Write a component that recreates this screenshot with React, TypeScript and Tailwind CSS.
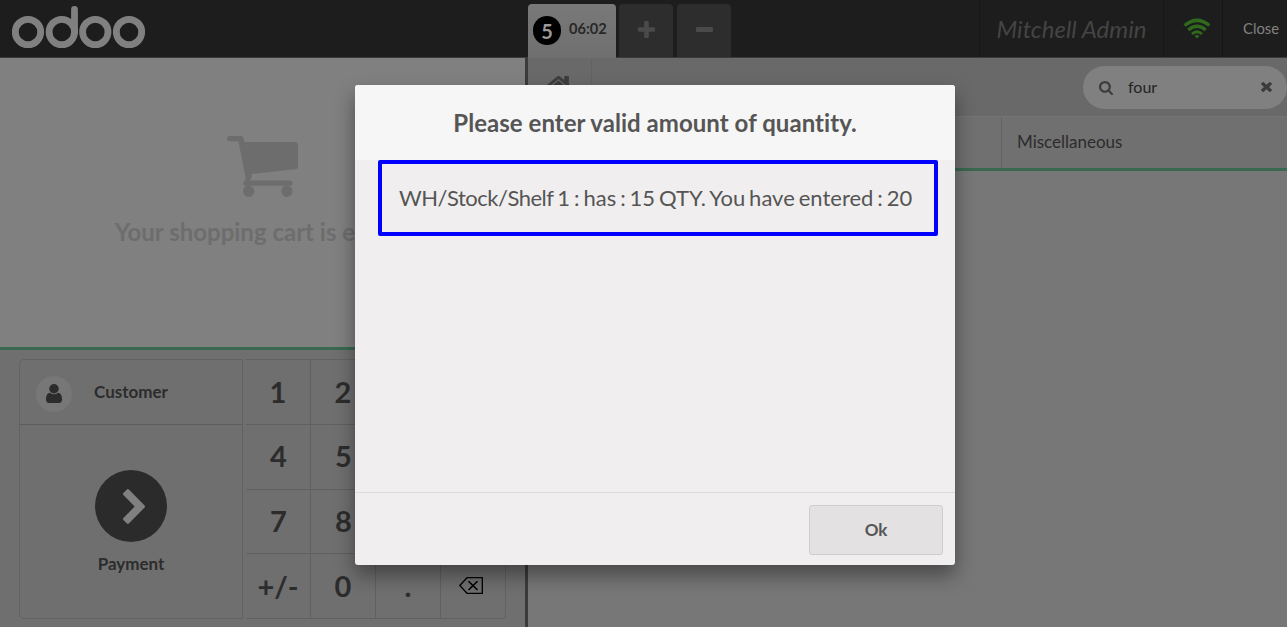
import React from "react";

function Glyph({ box, d, className }: { box: string; d: string; className: string }) {
  return (
    <svg viewBox={box} className={className} fill="currentColor" preserveAspectRatio="none">
      <path d={d} />
    </svg>
  );
}

const PLUS =
  "M1600 736v192q0 40-28 68t-68 28h-416v416q0 40-28 68t-68 28h-192q-40 0-68-28t-28-68v-416h-416q-40 0-68-28t-28-68v-192q0-40 28-68t68-28h416v-416q0-40 28-68t68-28h192q40 0 68 28t28 68v416h416q40 0 68 28t28 68z";
const MINUS = "M1600 736v192q0 40-28 68t-68 28h-1216q-40 0-68-28t-28-68v-192q0-40 28-68t68-28h1216q40 0 68 28t28 68z";
const USER =
  "M1536 1399q0 109-62.5 187t-150.5 78h-854q-88 0-150.5-78t-62.5-187q0-85 8.5-160.5t31.5-152 58.5-131 94-89 134.5-34.5q131 128 313 128t313-128q76 0 134.5 34.5t94 89 58.5 131 31.5 152 8.5 160.5zm-256-887q0 159-112.5 271.5t-271.5 112.5-271.5-112.5-112.5-271.5 112.5-271.5 271.5-112.5 271.5 112.5 112.5 271.5z";
const SEARCH =
  "M1216 832q0-185-131.5-316.5t-316.5-131.5-316.5 131.5-131.5 316.5 131.5 316.5 316.5 131.5 316.5-131.5 131.5-316.5zm512 832q0 52-38 90t-90 38q-54 0-90-38l-343-342q-179 124-399 124-143 0-273.5-55.5t-225-150-150-225-55.5-273.5 55.5-273.5 150-225 225-150 273.5-55.5 273.5 55.5 225 150 150 225 55.5 273.5q0 220-124 399l343 343q37 37 37 90z";
const TIMES =
  "M1490 1322q0 40-28 68l-136 136q-28 28-68 28t-68-28l-294-294-294 294q-28 28-68 28t-68-28l-136-136q-28-28-28-68t28-68l294-294-294-294q-28-28-28-68t28-68l136-136q28-28 68-28t68 28l294 294 294-294q28-28 68-28t68 28l136 136q28 28 28 68t-28 68l-294 294 294 294q28 28 28 68z";
const CHEVRON =
  "M1363 877l-742 742q-19 19-45 19t-45-19l-166-166q-19-19-19-45t19-45l531-531-531-531q-19-19-19-45t19-45l166-166q19-19 45-19t45 19l742 742q19 19 19 45t-19 45z";
const HOME =
  "M1472 992v480q0 26-19 45t-45 19h-384v-384h-256v384h-384q-26 0-45-19t-19-45v-480q0-1 .5-3t.5-3l575-474 575 474q1 2 1 6zm223-69l-62 74q-8 9-21 11h-3q-13 0-21-7l-692-577-692 577q-12 8-24 7-13-2-21-11l-62-74q-8-10-7-23.5t11-21.5l719-599q32-26 76-26t76 26l244 204v-195q0-14 9-23t23-9h192q14 0 23 9t9 23v408l219 182q10 8 11 21.5t-7 23.5z";

function Logo() {
  return (
    <svg viewBox="0 0 134 43" className="ml-3 mt-[6px] h-[43px] w-[134px]" fill="none" stroke="#808080" strokeWidth="6.8">
      <circle cx="16" cy="26" r="12.7" />
      <circle cx="49.8" cy="26" r="12.7" />
      <circle cx="83.3" cy="26" r="12.7" />
      <circle cx="117" cy="26" r="12.7" />
      <path d="M62.5 26V3.4" strokeLinecap="round" />
    </svg>
  );
}

function Header() {
  return (
    <header className="flex h-[58px] shrink-0 border-b border-[#3a3a3a] bg-[#1d1d1d]">
      <div className="w-[528px] shrink-0">
        <Logo />
      </div>
      <div className="-mb-px flex flex-1 items-end">
        <div className="flex h-[54px] w-[88px] items-center rounded-t-[4px] bg-linear-to-b from-[#797979] to-[#6f6f6f] pl-[5px]">
          <span className="mb-px flex h-[29px] w-7 items-center justify-center rounded-full bg-black text-[20px] font-bold text-[#9a9a9a]">5</span>
          <span className="ml-2 pb-[5px] text-[14.6px] font-bold text-[#282828]">06:02</span>
        </div>
        <div className="mb-px ml-[3px] flex h-[53px] w-[54px] items-center justify-center rounded-t-[4px] bg-[#2d2d2d] text-[#4a4a4a]">
          <Glyph box="192 128 1408 1408" d={PLUS} className="mb-[2px] h-[17px] w-[17px]" />
        </div>
        <div className="mb-px ml-1 flex h-[53px] w-[54px] items-center justify-center rounded-t-[4px] bg-[#2d2d2d] text-[#4a4a4a]">
          <Glyph box="192 640 1408 384" d={MINUS} className="mb-[2px] h-[5px] w-[17px]" />
        </div>
      </div>
      <div className="flex h-[57px] w-[184px] items-center justify-center border-l border-[#161616] pb-px text-[24px] italic text-[#444]">
        <span className="pt-[2px]">Mitchell Admin</span>
      </div>
      <div className="flex h-[57px] w-[59px] justify-center border-l border-[#161616] pl-[7px] pt-[18px]">
        <svg viewBox="0 0 28 21" className="h-[21px] w-7" fill="none" stroke="#2f691b" strokeWidth="3.5">
          <path d="M1.6 7.5Q14-2.7 26.4 7.5" />
          <path d="M5.3 12Q14 4.6 22.7 12" strokeWidth="3.3" />
          <path d="M9 16Q14 11.6 19 16" strokeWidth="2.9" />
          <path d="M11.6 17.9Q14 16 16.4 17.9L14 20.4Z" fill="#2f691b" stroke="none" />
        </svg>
      </div>
      <div className="flex h-[57px] w-[65px] items-center border-l border-[#161616] pl-5 text-[14.8px] text-[#828282]">Close</div>
    </header>
  );
}

function Key({ label, lift }: { label: string; lift?: boolean }) {
  return (
    <div
      className={
        lift
          ? "flex items-center justify-center border-b border-r border-[#606060] pb-[2px] pl-px text-[29px] font-bold text-[#2c2c2c]"
          : "flex items-center justify-center border-b border-r border-[#606060] text-[29px] font-bold text-[#2c2c2c]"
      }
    >
      {label}
    </div>
  );
}

function Backspace() {
  return (
    <div className="flex items-center justify-center rounded-br-[4px] border-b border-r border-[#626262] pb-[2px] pr-[4px]">
      <svg viewBox="0 0 24 17" className="h-[17px] w-6" fill="none" stroke="#000" strokeWidth="1.3">
        <path d="M.8 8.5L8 .7h15.3v15.6H8Z" />
        <path d="M9.5 4.2l9 8.8M18.5 4.2l-9 8.8" strokeWidth="1.6" />
      </svg>
    </div>
  );
}

function Cart() {
  return (
    <svg viewBox="0 0 72 62" className="h-[62px] w-[71px]" preserveAspectRatio="none" fill="#6d6d6d">
      <path d="M2.7 0H14.5Q16.5 0 17 3L17.5 6H69.5Q72 6 72 8.5V30.5Q72 33 69.5 33.3L25 38V41.5L23 44.5H63.8a2.6 2.6 0 0 1 0 5.3H19.3Q16.5 49.8 16.5 47.2L19 42.5L11.6 5.3H2.7a2.65 2.65 0 0 1 0-5.3Z" />
      <circle cx="22" cy="55.3" r="5.7" />
      <circle cx="60.8" cy="55.3" r="5.7" />
    </svg>
  );
}

function OrderPane() {
  return (
    <section className="flex w-[528px] shrink-0 flex-col border-r-[3px] border-[#3b3b3b] bg-[#6f6f6f]">
      <div className="flex h-[292px] shrink-0 flex-col items-center border-b-[3px] border-[#3a6850] bg-[#808080] pt-[78px]">
        <Cart />
        <p className="mt-[18px] text-[24px] font-bold leading-8 text-[#6d6d6d]">Your shopping cart is empty</p>
      </div>
      <div className="ml-[19px] mt-[9px] flex h-[260px]">
        <div className="flex w-[224px] shrink-0 flex-col rounded-l-[5px] border border-[#626262]">
          <div className="flex h-[65px] items-center border-b border-[#5c5c5c] pl-4 text-[#2c2c2c]">
            <span className="mt-1 flex h-9 w-9 items-center justify-center rounded-full bg-[#777] pb-[2px]">
              <Glyph box="256 128 1280 1536" d={USER} className="h-[19px] w-4" />
            </span>
            <span className="ml-[22px] text-[17px] font-bold">Customer</span>
          </div>
          <div className="flex flex-col items-center pt-[45px] text-[#2c2c2c]">
            <span className="flex h-[72px] w-[72px] items-center justify-center rounded-full bg-[#2b2b2b] pl-[6px] pt-px text-[#808080]">
              <Glyph box="346 25 1036 1613" d={CHEVRON} className="h-[35px] w-[22px]" />
            </span>
            <span className="mt-[9px] text-[17px] font-bold">Payment</span>
          </div>
        </div>
        <div className="ml-[3px] grid w-[260px] grid-cols-4 grid-rows-4 border-t border-[#626262]">
          <Key label="1" />
          <Key label="2" />
          <Key label="3" />
          <Key label="Qty" />
          <Key label="4" lift />
          <Key label="5" lift />
          <Key label="6" lift />
          <Key label="Disc" lift />
          <Key label="7" lift />
          <Key label="8" lift />
          <Key label="9" lift />
          <Key label="Price" lift />
          <Key label="+/-" />
          <Key label="0" />
          <Key label="." />
          <Backspace />
        </div>
      </div>
    </section>
  );
}

function ProductPane() {
  return (
    <section className="flex flex-1 flex-col bg-[#777]">
      <div className="flex h-[59px] items-start justify-between border-b border-[#747474] bg-[#696969]">
        <div className="flex h-[57px] w-16 justify-center border-r border-[#626262] pr-[3px] pt-[18px] text-[#3d3d3d]">
          <Glyph box="89 256 1614 1280" d={HOME} className="h-[23px] w-[29px]" />
        </div>
        <div className="mt-2 flex h-[43px] w-[204px] items-center rounded-full bg-[#808080] pl-4 pr-[15px] text-[#3c3c3c]">
          <Glyph box="64 128 1664 1664" d={SEARCH} className="h-[14px] w-[14px]" />
          <span className="ml-[15px] flex-1 pb-[2px] text-[16px] text-[#232323]">four</span>
          <Glyph box="302 366 1188 1188" d={TIMES} className="mb-px h-[10px] w-[11px]" />
        </div>
      </div>
      <div className="flex h-[54px] justify-end border-b-[3px] border-[#3a6850] bg-[#707070]">
        <div className="flex w-[286px] items-center border-l border-[#626262] pb-px pl-[15px] text-[17px] text-[#2c2c2c]">Miscellaneous</div>
      </div>
    </section>
  );
}

function Dialog() {
  return (
    <div className="absolute inset-0 flex pl-[355px] pt-[85px]">
      <div
        role="dialog"
        className="flex h-[480px] w-[600px] flex-col overflow-hidden rounded-[3px] bg-[#f0eeee] text-[#555] shadow-[0_10px_20px_rgba(0,0,0,0.4)]"
      >
        <h1 className="flex h-[76px] shrink-0 items-center justify-center border-b border-[#f0eeee] bg-[#f6f6f6] text-[24px] font-bold tracking-[0.04px]">
          Please enter valid amount of quantity.
        </h1>
        <div className="flex-1">
          <div className="-mt-px ml-[23px] h-[76px] w-[560px] rounded-[2px] border-4 border-[#00f] pl-[17px] text-[22px] leading-[68px] whitespace-nowrap [word-spacing:-1.7px]">
            <span className="tracking-[-0.5px]">WH/Stock/Shelf</span> 1 : has : 15 QTY. You have entered : 20
          </div>
        </div>
        <div className="flex h-[73px] shrink-0 justify-end border-t border-[#dcdadb] pr-3 pt-3">
          <button className="h-[50px] w-[134px] rounded-[3px] border border-[#cfcdce] bg-[#e3e1e2] text-[17px] font-bold">Ok</button>
        </div>
      </div>
    </div>
  );
}

export default function App() {
  return (
    <div className="relative flex h-[627px] w-[1287px] flex-col overflow-hidden font-['Lato',sans-serif] [font-variant-ligatures:none]">
      <Header />
      <div className="flex min-h-0 flex-1">
        <OrderPane />
        <ProductPane />
      </div>
      <Dialog />
    </div>
  );
}
